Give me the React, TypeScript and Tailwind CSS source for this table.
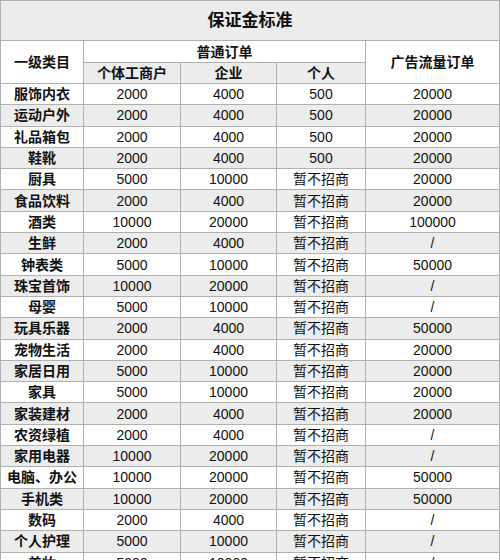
import * as React from "react";

type Row = [string, string, string, string, string];

const rows: Row[] = [
  ["服饰内衣", "2000", "4000", "500", "20000"],
  ["运动户外", "2000", "4000", "500", "20000"],
  ["礼品箱包", "2000", "4000", "500", "20000"],
  ["鞋靴", "2000", "4000", "500", "20000"],
  ["厨具", "5000", "10000", "暂不招商", "20000"],
  ["食品饮料", "2000", "4000", "暂不招商", "20000"],
  ["酒类", "10000", "20000", "暂不招商", "100000"],
  ["生鲜", "2000", "4000", "暂不招商", "/"],
  ["钟表类", "5000", "10000", "暂不招商", "50000"],
  ["珠宝首饰", "10000", "20000", "暂不招商", "/"],
  ["母婴", "5000", "10000", "暂不招商", "/"],
  ["玩具乐器", "2000", "4000", "暂不招商", "50000"],
  ["宠物生活", "2000", "4000", "暂不招商", "20000"],
  ["家居日用", "5000", "10000", "暂不招商", "20000"],
  ["家具", "5000", "10000", "暂不招商", "20000"],
  ["家装建材", "2000", "4000", "暂不招商", "20000"],
  ["农资绿植", "2000", "4000", "暂不招商", "/"],
  ["家用电器", "10000", "20000", "暂不招商", "/"],
  ["电脑、办公", "10000", "20000", "暂不招商", "50000"],
  ["手机类", "10000", "20000", "暂不招商", "50000"],
  ["数码", "2000", "4000", "暂不招商", "/"],
  ["个人护理", "5000", "10000", "暂不招商", "/"],
  ["美妆", "5000", "10000", "暂不招商", "/"],
];

const cell = "border border-[#b0b0b0] text-center align-middle p-0 leading-none";

export default function App() {
  return (
    <div className="h-[560px] w-[500px] overflow-hidden bg-white text-[#111] font-['Liberation_Sans','Noto_Sans_CJK_SC',sans-serif]">
      <table className="w-[499px] table-fixed border-collapse text-[14px]">
        <colgroup>
          <col className="w-[83px]" />
          <col className="w-[97px]" />
          <col className="w-[96px]" />
          <col className="w-[89px]" />
          <col className="w-[134px]" />
        </colgroup>
        <thead>
          <tr className="h-[40px] bg-[#ececec]">
            <th colSpan={5} className={`${cell} text-[17px] font-bold`}>
              保证金标准
            </th>
          </tr>
          <tr className="h-[22px]">
            <th rowSpan={2} className={`${cell} font-semibold`}>
              一级类目
            </th>
            <th colSpan={3} className={`${cell} font-semibold`}>
              普通订单
            </th>
            <th rowSpan={2} className={`${cell} font-semibold`}>
              广告流量订单
            </th>
          </tr>
          <tr className="h-[21px] bg-[#ececec]">
            <th className={`${cell} font-semibold`}>个体工商户</th>
            <th className={`${cell} font-semibold`}>企业</th>
            <th className={`${cell} font-semibold`}>个人</th>
          </tr>
        </thead>
        <tbody>
          {rows.map((r, i) => (
            <tr key={r[0]} className={`h-[21.3px] ${i % 2 === 1 ? "bg-[#ececec]" : "bg-white"}`}>
              <td className={`${cell} font-semibold`}>{r[0]}</td>
              <td className={cell}>{r[1]}</td>
              <td className={cell}>{r[2]}</td>
              <td className={cell}>{r[3]}</td>
              <td className={cell}>{r[4]}</td>
            </tr>
          ))}
        </tbody>
      </table>
    </div>
  );
}
